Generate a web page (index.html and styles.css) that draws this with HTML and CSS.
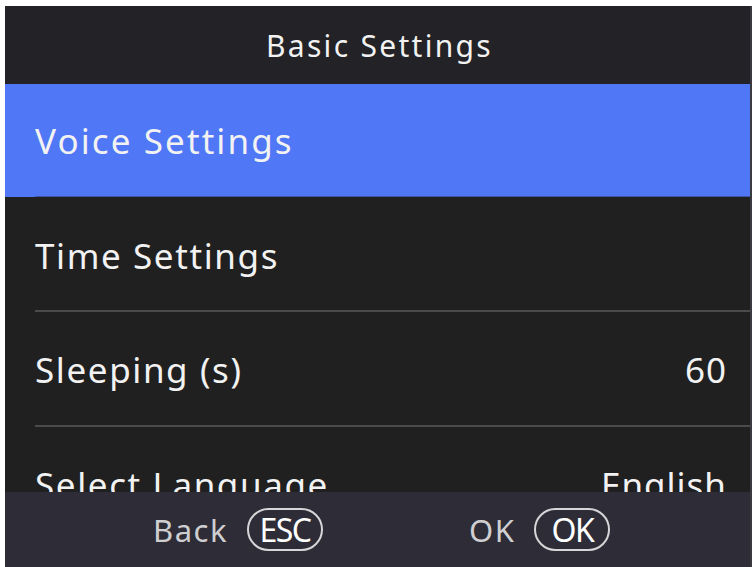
FILE: index.html
```html
<!DOCTYPE html>
<html lang="en">
<head>
  <meta charset="utf-8" />
  <title>Basic Settings</title>
  <meta name="viewport" content="width=device-width, initial-scale=1" />
  <link rel="stylesheet" href="styles.css">
</head>
<body>
  <div class="screen">
    <div class="title-bar">Basic Settings</div>
    <div class="menu">
      <div class="item active">
        <div class="item-inner"><span class="label">Voice Settings</span></div>
      </div>
      <div class="item">
        <div class="item-inner"><span class="label">Time Settings</span></div>
      </div>
      <div class="item">
        <div class="item-inner"><span class="label">Sleeping (s)</span><span class="value">60</span></div>
      </div>
      <div class="item">
        <div class="item-inner"><span class="label">Select Language</span><span class="value">English</span></div>
      </div>
    </div>
    <div class="footer">
      <div class="key-hint">
        <span class="hint-text">Back</span>
        <span class="key">ESC</span>
      </div>
      <div class="key-hint">
        <span class="hint-text">OK</span>
        <span class="key">OK</span>
      </div>
    </div>
  </div>
</body>
</html>
```

FILE: styles.css
```css
* {
  box-sizing: border-box;
  margin: 0;
  padding: 0;
}

body {
  background-color: #fff;
  font-family: "Noto Sans", "DejaVu Sans", sans-serif;
  color: #f2f2f2;
}

.screen {
  margin: 6px 0 0 5px;
  width: 747px;
  height: 561px;
  display: flex;
  flex-direction: column;
  overflow: hidden;
  background-color: #202021;
  border-right: 2px solid #3a3a40;
}

.title-bar {
  height: 78px;
  flex-shrink: 0;
  display: flex;
  align-items: center;
  justify-content: center;
  padding-left: 4px;
  background-color: #232226;
  font-size: 30px;
  letter-spacing: 2.3px;
}

.menu {
  flex: 1;
  overflow: hidden;
}

.item {
  height: 115px;
}

.item-inner {
  height: 100%;
  margin-left: 30px;
  padding-right: 23px;
  display: flex;
  align-items: center;
  justify-content: space-between;
  border-bottom: 2px solid #4b4b4d;
  font-size: 35px;
  letter-spacing: 1.6px;
}

.value {
  letter-spacing: 1px;
}

.item.active {
  height: 113px;
  background-color: #4f77f6;
}

.item.active .item-inner {
  border-bottom: 1px solid #3d56a8;
  letter-spacing: 2.1px;
}

.item:nth-child(2) .item-inner {
  padding-top: 3px;
}

.item:nth-child(3) .item-inner,
.item:nth-child(4) .item-inner {
  padding-top: 2px;
}

.footer {
  height: 75px;
  flex-shrink: 0;
  display: flex;
  align-items: center;
  padding-left: 148px;
  gap: 146px;
  background-color: #2e2d37;
}

.key-hint {
  display: flex;
  align-items: center;
  gap: 19px;
}

.hint-text {
  font-size: 31px;
  letter-spacing: 1.5px;
  color: #cfcfd2;
}

.key {
  height: 43px;
  width: 76px;
  display: flex;
  align-items: center;
  justify-content: center;
  border: 2px solid #d6d6d8;
  border-radius: 22px;
  font-size: 32px;
  letter-spacing: -1.5px;
  color: #fff;
}
```
